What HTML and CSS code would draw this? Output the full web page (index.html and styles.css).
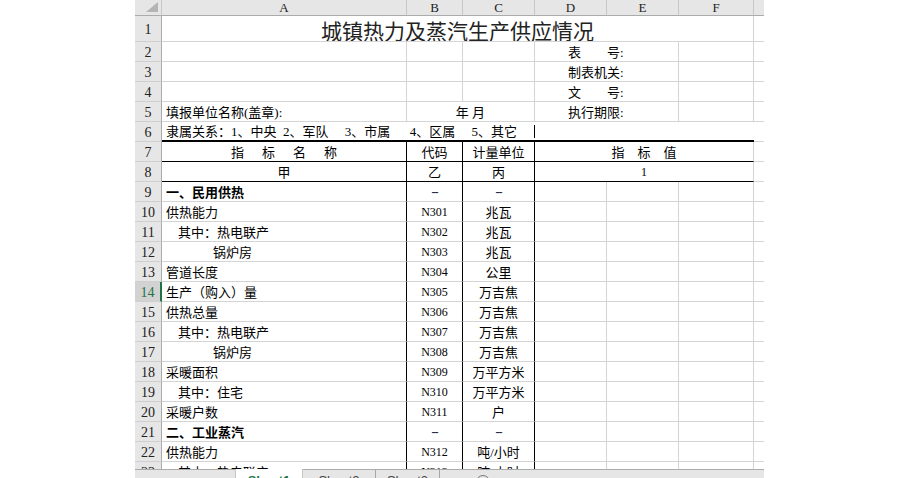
FILE: index.html
```html
<!DOCTYPE html>
<html lang="zh-CN">
<head>
<meta charset="utf-8">
<title>城镇热力及蒸汽生产供应情况</title>
<link rel="stylesheet" href="styles.css">
</head>
<body>
<div class="app">
  <div class="sheet">
    <div class="grid">
      <!-- column header -->
      <div class="c hd corner"><svg width="14" height="12" viewBox="0 0 14 12"><polygon points="13,1 13,11 1,11" fill="#b4b4b4"/></svg></div>
      <div class="c hd">A</div>
      <div class="c hd">B</div>
      <div class="c hd">C</div>
      <div class="c hd">D</div>
      <div class="c hd">E</div>
      <div class="c hd">F</div>
      <div class="c hd g"></div>

      <!-- row 1 -->
      <div class="c rh">1</div>
      <div class="c title span6">城镇热力及蒸汽生产供应情况</div>
      <div class="c g"></div>

      <!-- row 2 -->
      <div class="c rh">2</div>
      <div class="c"></div>
      <div class="c"></div>
      <div class="c"></div>
      <div class="c span2 meta">表　　号:</div>
      <div class="c"></div>
      <div class="c g"></div>

      <!-- row 3 -->
      <div class="c rh">3</div>
      <div class="c"></div>
      <div class="c"></div>
      <div class="c"></div>
      <div class="c span2 meta">制表机关:</div>
      <div class="c"></div>
      <div class="c g"></div>

      <!-- row 4 -->
      <div class="c rh">4</div>
      <div class="c"></div>
      <div class="c"></div>
      <div class="c"></div>
      <div class="c span2 meta">文　　号:</div>
      <div class="c"></div>
      <div class="c g"></div>

      <!-- row 5 -->
      <div class="c rh">5</div>
      <div class="c a">填报单位名称(盖章):</div>
      <div class="c span2 ctr">年 月</div>
      <div class="c span2 meta">执行期限:</div>
      <div class="c"></div>
      <div class="c g"></div>

      <!-- row 6 -->
      <div class="c rh">6</div>
      <div class="c a span3 thick r6a">隶属关系：1、中央  2、军队　 3、市属　  4、区属　 5、其它</div>
      <div class="c span3 thick"></div>
      <div class="c g"></div>

      <!-- row 7 -->
      <div class="c rh">7</div>
      <div class="c ctr bR bB"><span class="spread s18"><span>指</span><span>标</span><span>名</span><span>称</span></span></div>
      <div class="c ctr bR bB">代码</div>
      <div class="c ctr bR bB">计量单位</div>
      <div class="c ctr span3 bB"><span class="spread s13"><span>指</span><span>标</span><span>值</span></span></div>
      <div class="c g"></div>

      <!-- row 8 -->
      <div class="c rh">8</div>
      <div class="c ctr bR bB">甲</div>
      <div class="c ctr bR bB">乙</div>
      <div class="c ctr bR bB">丙</div>
      <div class="c ctr span3 bB num">1</div>
      <div class="c g"></div>

      <!-- row 9 -->
      <div class="c rh">9</div>
      <div class="c a bR bold">一、民用供热</div>
      <div class="c ctr bR num dash">--</div>
      <div class="c ctr bR num dash">--</div>
      <div class="c"></div><div class="c"></div><div class="c"></div><div class="c g"></div>

      <!-- row 10 -->
      <div class="c rh">10</div>
      <div class="c a bR">供热能力</div>
      <div class="c ctr bR num">N301</div>
      <div class="c ctr bR">兆瓦</div>
      <div class="c"></div><div class="c"></div><div class="c"></div><div class="c g"></div>

      <!-- row 11 -->
      <div class="c rh">11</div>
      <div class="c a i1 bR">其中：热电联产</div>
      <div class="c ctr bR num">N302</div>
      <div class="c ctr bR">兆瓦</div>
      <div class="c"></div><div class="c"></div><div class="c"></div><div class="c g"></div>

      <!-- row 12 -->
      <div class="c rh">12</div>
      <div class="c a i2 bR">锅炉房</div>
      <div class="c ctr bR num">N303</div>
      <div class="c ctr bR">兆瓦</div>
      <div class="c"></div><div class="c"></div><div class="c"></div><div class="c g"></div>

      <!-- row 13 -->
      <div class="c rh">13</div>
      <div class="c a bR">管道长度</div>
      <div class="c ctr bR num">N304</div>
      <div class="c ctr bR">公里</div>
      <div class="c"></div><div class="c"></div><div class="c"></div><div class="c g"></div>

      <!-- row 14 -->
      <div class="c rh act">14</div>
      <div class="c a bR">生产（购入）量</div>
      <div class="c ctr bR num">N305</div>
      <div class="c ctr bR">万吉焦</div>
      <div class="c"></div><div class="c"></div><div class="c"></div><div class="c g"></div>

      <!-- row 15 -->
      <div class="c rh">15</div>
      <div class="c a bR">供热总量</div>
      <div class="c ctr bR num">N306</div>
      <div class="c ctr bR">万吉焦</div>
      <div class="c"></div><div class="c"></div><div class="c"></div><div class="c g"></div>

      <!-- row 16 -->
      <div class="c rh">16</div>
      <div class="c a i1 bR">其中：热电联产</div>
      <div class="c ctr bR num">N307</div>
      <div class="c ctr bR">万吉焦</div>
      <div class="c"></div><div class="c"></div><div class="c"></div><div class="c g"></div>

      <!-- row 17 -->
      <div class="c rh">17</div>
      <div class="c a i2 bR">锅炉房</div>
      <div class="c ctr bR num">N308</div>
      <div class="c ctr bR">万吉焦</div>
      <div class="c"></div><div class="c"></div><div class="c"></div><div class="c g"></div>

      <!-- row 18 -->
      <div class="c rh">18</div>
      <div class="c a bR">采暖面积</div>
      <div class="c ctr bR num">N309</div>
      <div class="c ctr bR">万平方米</div>
      <div class="c"></div><div class="c"></div><div class="c"></div><div class="c g"></div>

      <!-- row 19 -->
      <div class="c rh">19</div>
      <div class="c a i1 bR">其中：住宅</div>
      <div class="c ctr bR num">N310</div>
      <div class="c ctr bR">万平方米</div>
      <div class="c"></div><div class="c"></div><div class="c"></div><div class="c g"></div>

      <!-- row 20 -->
      <div class="c rh">20</div>
      <div class="c a bR">采暖户数</div>
      <div class="c ctr bR num">N311</div>
      <div class="c ctr bR">户</div>
      <div class="c"></div><div class="c"></div><div class="c"></div><div class="c g"></div>

      <!-- row 21 -->
      <div class="c rh">21</div>
      <div class="c a bR bold">二、工业蒸汽</div>
      <div class="c ctr bR num dash">--</div>
      <div class="c ctr bR num dash">--</div>
      <div class="c"></div><div class="c"></div><div class="c"></div><div class="c g"></div>

      <!-- row 22 -->
      <div class="c rh">22</div>
      <div class="c a bR">供热能力</div>
      <div class="c ctr bR num">N312</div>
      <div class="c ctr bR">吨/小时</div>
      <div class="c"></div><div class="c"></div><div class="c"></div><div class="c g"></div>

      <!-- row 23 -->
      <div class="c rh">23</div>
      <div class="c a i1 bR">其中：热电联产</div>
      <div class="c ctr bR num">N313</div>
      <div class="c ctr bR">吨/小时</div>
      <div class="c"></div><div class="c"></div><div class="c"></div><div class="c g"></div>
    </div>
  </div>
  <div class="tabs">
    <div class="tnav"></div>
    <div class="tab active">Sheet1</div>
    <div class="tab t2">Sheet2</div>
    <div class="tab t3">Sheet3</div>
    <div class="add"></div>
  </div>
</div>
</body>
</html>
```

FILE: styles.css
```css
* {
  box-sizing: border-box;
  margin: 0;
  padding: 0;
}

html, body {
  width: 900px;
  height: 478px;
  overflow: hidden;
  background: #ffffff;
}

body {
  font-family: "Liberation Serif", "Noto Sans CJK SC", serif;
  font-size: 13px;
  color: #000000;
}

.app {
  display: flex;
  flex-direction: column;
  width: 764px;
  height: 478px;
  padding-left: 135px;
}

.sheet {
  flex: none;
  height: 469px;
  overflow: hidden;
}

.grid {
  display: grid;
  grid-template-columns: 27px 245px 56px 72px 72px 72px 75px 10px;
  grid-template-rows: 16px 26px;
  grid-auto-rows: 20px;
}

.c {
  display: flex;
  align-items: center;
  border-right: 1px solid #d4d4d4;
  border-bottom: 1px solid #d4d4d4;
  white-space: pre;
  overflow: hidden;
  line-height: 1;
  padding-top: 1px;
}

.g {
  border-right: none;
}

.hd {
  background: #e6e6e6;
  border-right: 1px solid #c6c6c6;
  border-bottom: 1px solid #ababab;
  justify-content: center;
  font-family: "Liberation Serif", serif;
  font-size: 13px;
  color: #222222;
  padding-top: 0;
}

.hd.g {
  border-right: none;
}

.corner {
  justify-content: flex-end;
  align-items: flex-end;
  padding: 0 2px 2px 0;
}

.rh {
  background: #e6e6e6;
  border-right: 1px solid #ababab;
  border-bottom: 1px solid #cfcfcf;
  justify-content: center;
  font-family: "Liberation Serif", serif;
  font-size: 14px;
  color: #222222;
  padding-top: 2px;
}

.rh.act {
  background: #d2d2d2;
  color: #217346;
  border-right: 2px solid #217346;
}

.span2 { grid-column: span 2; }
.span3 { grid-column: span 3; }
.span6 { grid-column: span 6; }

.title {
  justify-content: center;
  align-items: center;
  padding-top: 2px;
  font-family: "Noto Sans CJK SC", sans-serif;
  font-size: 21px;
  line-height: 22px;
  color: #222222;
}

.meta {
  padding-left: 33px;
}

.ctr {
  justify-content: center;
}

.a {
  padding-left: 4px;
}

.i1 {
  padding-left: 16px;
}

.i2 {
  padding-left: 51px;
}

.bold {
  font-weight: bold;
}

.bR {
  border-right-color: #000000;
}

.bB {
  border-bottom-color: #000000;
}

.thick {
  border-right: none;
  border-bottom: 2px solid #000000;
}

.r6a {
  position: relative;
}

.r6a::after {
  content: "";
  position: absolute;
  right: 0;
  top: 3px;
  width: 1px;
  height: 13px;
  background: #000000;
}

.num {
  font-family: "Liberation Serif", serif;
  font-size: 12px;
}

.dash {
  color: #1f2a44;
  font-weight: bold;
  letter-spacing: -1px;
}

.spread {
  display: inline-flex;
}

.s18 {
  gap: 18px;
}

.s13 {
  gap: 13px;
}

.tabs {
  flex: none;
  display: flex;
  height: 30px;
  background: #e6e6e6;
  border-top: 1px solid #ababab;
}

.tnav {
  width: 100px;
}

.tab {
  font-family: "Liberation Sans", sans-serif;
  font-size: 13px;
  line-height: 16px;
  padding-top: 3px;
  text-align: center;
  color: #444444;
}

.tab.active {
  width: 68px;
  margin-top: -1px;
  padding-top: 4px;
  background: #ffffff;
  color: #217346;
  font-weight: bold;
  border-left: 1px solid #c6c6c6;
  border-right: 1px solid #c6c6c6;
}

.t2 {
  width: 72px;
}

.t3 {
  width: 65px;
  border-left: 1px solid #a6a6a6;
  border-right: 1px solid #a6a6a6;
}

.add {
  width: 14px;
  height: 14px;
  margin-left: 36px;
  margin-top: 5px;
  border: 1px solid #777777;
  border-radius: 50%;
}
```
